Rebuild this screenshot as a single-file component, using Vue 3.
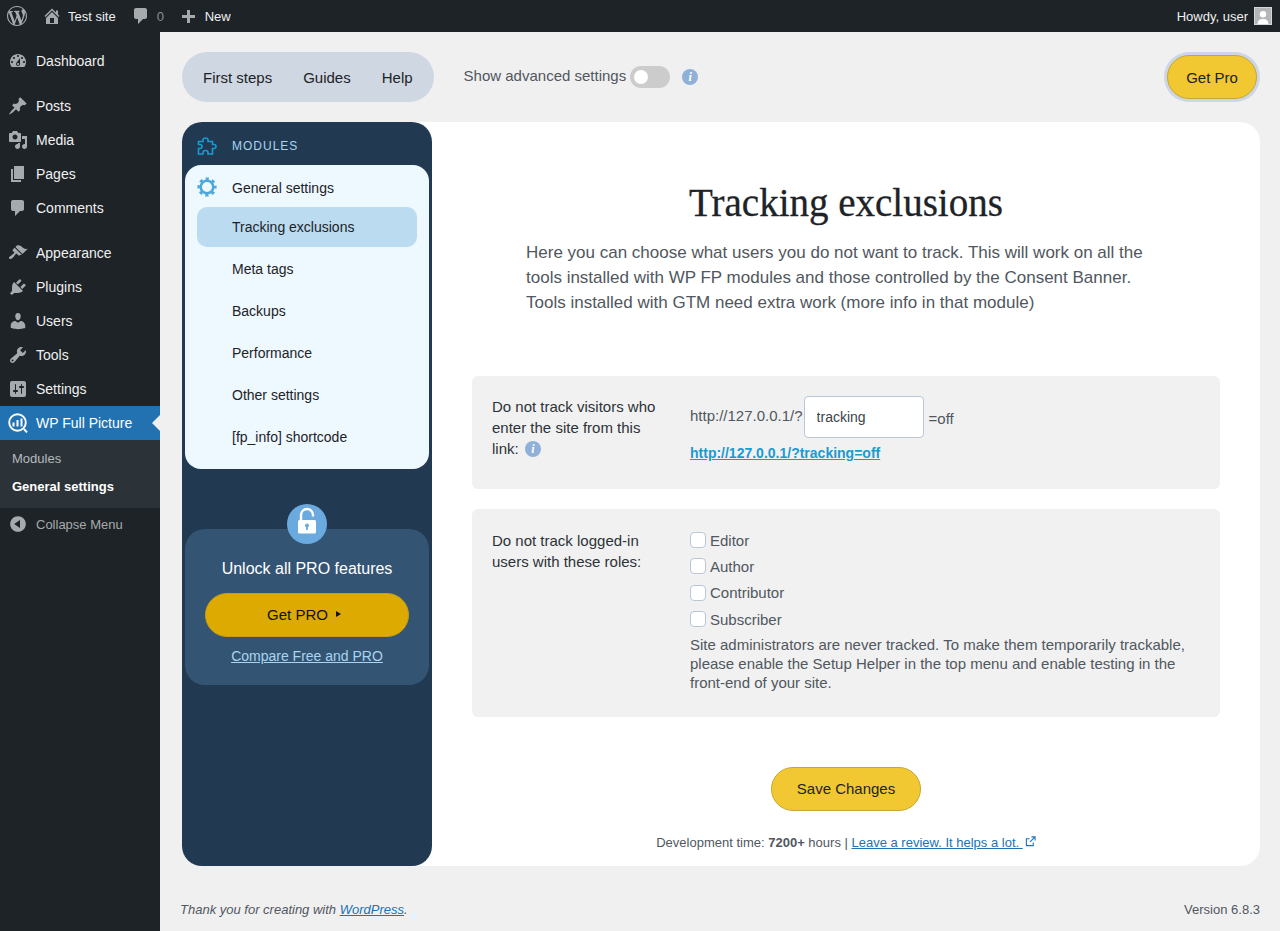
<script setup>
const icons = {
  wp: "M20 10c0-5.51-4.49-10-10-10C4.48 0 0 4.49 0 10c0 5.52 4.48 10 10 10 5.51 0 10-4.48 10-10zM7.78 15.37L4.37 6.22c.55-.02 1.17-.08 1.17-.08.5-.06.44-1.13-.06-1.11 0 0-1.45.11-2.37.11-.18 0-.37 0-.58-.01C4.12 2.69 6.87 1.11 10 1.11c2.33 0 4.45.87 6.05 2.34-.68-.11-1.65.39-1.65 1.58 0 .74.45 1.36.9 2.1.35.61.55 1.36.55 2.46 0 1.49-1.4 5-1.4 5l-3.03-8.37c.54-.02.82-.17.82-.17.5-.05.44-1.25-.06-1.22 0 0-1.44.12-2.38.12-.87 0-2.33-.12-2.33-.12-.5-.03-.56 1.2-.06 1.22l.92.08 1.26 3.41zM17.41 10c.24-.64.74-1.87.43-4.25.7 1.29 1.05 2.71 1.05 4.25 0 3.29-1.73 6.24-4.4 7.78.97-2.59 1.94-5.2 2.92-7.78zM6.1 18.09C3.12 16.65 1.11 13.53 1.11 10c0-1.3.23-2.48.72-3.59C3.25 10.3 4.67 14.2 6.1 18.09zm4.03-6.63l2.58 6.98c-.86.29-1.76.45-2.71.45-.79 0-1.57-.11-2.29-.33.81-2.38 1.62-4.72 2.42-7.1z",
  home: "M16 8.5l1.53 1.53-1.06 1.06L10 4.62l-6.47 6.47-1.06-1.06L10 2.5l4 4v-2h2v4zm-6-2.46l6 5.99V18H4v-5.97zM12 17v-5H8v5h4z",
  comment: "M5 2h9c1.1 0 2 .9 2 2v7c0 1.1-.9 2-2 2h-2l-5 5v-5H5c-1.1 0-2-.9-2-2V4c0-1.1.9-2 2-2z",
  plus: "M17 7v3h-5v5H9v-5H4V7h5V2h3v5h5z",
  dashboard: "M3.76 16h12.48c1.1-1.37 1.76-3.11 1.76-5 0-4.42-3.58-8-8-8s-8 3.58-8 8c0 1.89.66 3.63 1.76 5zM10 4c.55 0 1 .45 1 1s-.45 1-1 1-1-.45-1-1 .45-1 1-1zM6 6c.55 0 1 .45 1 1s-.45 1-1 1-1-.45-1-1 .45-1 1-1zm8 0c.55 0 1 .45 1 1s-.45 1-1 1-1-.45-1-1 .45-1 1-1zm-5.37 5.55L12 7v6c0 1.1-.9 2-2 2s-2-.9-2-2c0-.57.24-1.08.63-1.45zM4 10c.55 0 1 .45 1 1s-.45 1-1 1-1-.45-1-1 .45-1 1-1zm12 0c.55 0 1 .45 1 1s-.45 1-1 1-1-.45-1-1 .45-1 1-1zm-5 3c0-.55-.45-1-1-1s-1 .45-1 1 .45 1 1 1 1-.45 1-1z",
  posts: "M10.44 3.02l1.82-1.82 6.36 6.35-1.83 1.82c-1.05-.68-2.48-.57-3.41.36l-.75.75c-.92.93-1.04 2.35-.35 3.41l-1.83 1.82-2.41-2.41-2.8 2.79c-.42.42-3.38 2.71-3.8 2.29s1.86-3.39 2.28-3.81l2.79-2.79L4.1 9.36l1.83-1.82c1.05.69 2.48.57 3.4-.36l.75-.75c.93-.92 1.05-2.35.36-3.41z",
  media: "M13 11V4c0-.55-.45-1-1-1h-1.67L9 1H5L3.67 3H2c-.55 0-1 .45-1 1v7c0 .55.45 1 1 1h10c.55 0 1-.45 1-1zM7 4.5c1.38 0 2.5 1.12 2.5 2.5S8.38 9.5 7 9.5 4.5 8.38 4.5 7 5.62 4.5 7 4.5zM14 6h5v10.5c0 1.38-1.12 2.5-2.5 2.5S14 17.88 14 16.5s1.12-2.5 2.5-2.5c.17 0 .34.02.5.05V9h-3V6zm-4 8.05V13h2v3.5c0 1.38-1.12 2.5-2.5 2.5S7 17.88 7 16.5 8.12 14 9.5 14c.17 0 .34.02.5.05z",
  pages: "M6 15V2h10v13H6zm-1 1h8v2H3V5h2v11z",
  appearance: "M14.48 11.06L7.41 3.99l1.5-1.5c.5-.56 2.3-.47 3.51.32 1.21.8 1.43 1.28 2.91 2.1 1.18.64 2.45 1.26 4.45.85zm-.71.71L6.7 4.7 4.93 6.47c-.39.39-.39 1.02 0 1.41l1.06 1.06c.39.39.39 1.03 0 1.42-.6.6-1.43 1.11-2.21 1.69-.35.26-.7.53-1.01.84C1.43 13.23.4 14.75 1.4 15.7c.95 1 2.47-.03 3.81-1.37.31-.31.58-.66.84-1.01.58-.78 1.09-1.61 1.69-2.21.39-.39 1.02-.39 1.41 0l1.06 1.06c.39.39 1.02.39 1.41 0z",
  plugins: "M13.11 4.36L9.87 7.6 8 5.73l3.24-3.24c.35-.34 1.05-.2 1.56.32.52.51.66 1.21.31 1.55zm-8 1.77l.91-1.12 9.01 9.01-1.19.84c-.71.71-2.63 1.16-3.82 1.16H6.14L4.9 17.26c-.59.59-1.54.59-2.12 0-.59-.58-.59-1.53 0-2.12l1.24-1.24v-3.88c0-1.13.4-3.19 1.09-3.89zm7.26 3.97l3.24-3.24c.34-.35 1.04-.21 1.55.31.52.51.66 1.21.31 1.55l-3.24 3.25z",
  users: "M10 9.25c-2.27 0-2.73-3.44-2.73-3.44C7 4.02 7.82 2 9.97 2c2.16 0 2.98 2.02 2.71 3.81 0 0-.41 3.44-2.68 3.44zm0 2.57L12.72 10c2.39 0 4.52 2.33 4.52 4.53v2.49s-3.65 1.13-7.24 1.13c-3.65 0-7.24-1.13-7.24-1.13v-2.49c0-2.25 1.94-4.48 4.47-4.48z",
  tools: "M16.68 9.77c-1.34 1.34-3.3 1.67-4.95.99l-5.41 6.52c-.99.99-2.59.99-3.58 0s-.99-2.59 0-3.57l6.52-5.42c-.68-1.65-.35-3.61.99-4.95 1.28-1.28 3.12-1.62 4.72-1.06l-2.89 2.89 2.82 2.82 2.86-2.87c.53 1.58.18 3.39-1.08 4.65zM3.81 16.21c.4.39 1.04.39 1.43 0 .4-.4.4-1.04 0-1.43-.39-.4-1.03-.4-1.43 0-.39.39-.39 1.03 0 1.43z",
  settings: "M18 16V4c0-1.1-.9-2-2-2H4c-1.1 0-2 .9-2 2v12c0 1.1.9 2 2 2h12c1.1 0 2-.9 2-2zM8 11h1c.55 0 1 .45 1 1s-.45 1-1 1H8v1.5c0 .28-.22.5-.5.5s-.5-.22-.5-.5V13H6c-.55 0-1-.45-1-1s.45-1 1-1h1V5.5c0-.28.22-.5.5-.5s.5.22.5.5V11zm5-2h-1c-.55 0-1-.45-1-1s.45-1 1-1h1V5.5c0-.28.22-.5.5-.5s.5.22.5.5V7h1c.55 0 1 .45 1 1s-.45 1-1 1h-1v5.5c0 .28-.22.5-.5.5s-.5-.22-.5-.5V9z",
  collapse: "M10 2.16c4.33 0 7.84 3.51 7.84 7.84s-3.51 7.84-7.84 7.84S2.16 14.33 2.16 10 5.71 2.16 10 2.16zm2 11.72V6.12L6.18 9.97z",
}

// sidebar groups, wp puts a separator between them
const menuGroups = [
  [{ label: "Dashboard", icon: "dashboard" }],
  [
    { label: "Posts", icon: "posts" },
    { label: "Media", icon: "media" },
    { label: "Pages", icon: "pages" },
    { label: "Comments", icon: "comment" },
  ],
  [
    { label: "Appearance", icon: "appearance" },
    { label: "Plugins", icon: "plugins" },
    { label: "Users", icon: "users" },
    { label: "Tools", icon: "tools" },
    { label: "Settings", icon: "settings" },
  ],
]

const tabs = ["First steps", "Guides", "Help"]
const subLinks = [
  { label: "Tracking exclusions", active: true },
  { label: "Meta tags" },
  { label: "Backups" },
  { label: "Performance" },
  { label: "Other settings" },
  { label: "[fp_info] shortcode" },
]
const roles = ["Editor", "Author", "Contributor", "Subscriber"]
</script>

<template>
  <div class="page">
    <header class="adminbar">
      <svg class="bar-logo" viewBox="0 0 20 20"><path :d="icons.wp" /></svg>
      <svg class="bar-icon home" viewBox="0 0 20 20"><path :d="icons.home" /></svg>
      <span class="bar-text">Test site</span>
      <svg class="bar-icon bubble" viewBox="0 0 20 20"><path :d="icons.comment" /></svg>
      <span class="bar-count">0</span>
      <svg class="bar-icon plus" viewBox="0 0 20 20"><path :d="icons.plus" /></svg>
      <span class="bar-text">New</span>
      <span class="bar-text howdy">Howdy, user</span>
      <svg class="avatar" viewBox="0 0 18 18">
        <rect x=".5" y=".5" width="17" height="17" fill="#b4b7ba" stroke="#d4d6d8" />
        <circle cx="9" cy="7.200" r="3.200" fill="#fff" />
        <path d="M3.500 17c.3-3.800 2.500-5 5.500-5s5.200 1.200 5.500 5z" />
      </svg>
    </header>

    <div class="layout">
      <nav class="sidemenu">
        <div v-for="(group, i) in menuGroups" :key="i" class="menu-group">
          <a v-for="item in group" :key="item.label" class="menu-item">
            <svg viewBox="0 0 20 20"><path :d="icons[item.icon]" /></svg>
            <span>{{ item.label }}</span>
          </a>
        </div>
        <a class="menu-item current">
          <svg class="fp-icon" viewBox="0 0 20 20" fill="none" stroke="#fff">
            <circle cx="9.500" cy="9.500" r="8.300" stroke-width="1.900" />
            <path d="M16 16l3 3.300" stroke-width="2" />
            <path d="M5.500 9.500v4M9.500 7v6.500M13.500 5.500v8" stroke-width="2" />
          </svg>
          <span>WP Full Picture</span>
        </a>
        <div class="submenu">
          <a>Modules</a>
          <a class="strong">General settings</a>
        </div>
        <a class="menu-item collapse">
          <svg viewBox="0 0 20 20"><path :d="icons.collapse" /></svg>
          <span>Collapse Menu</span>
        </a>
      </nav>

      <main class="content">
        <div class="topline">
          <div class="tabs">
            <a v-for="tab in tabs" :key="tab">{{ tab }}</a>
          </div>
          <span class="advanced">Show advanced settings</span>
          <span class="toggle"><i></i></span>
          <span class="info top-info">i</span>
          <button class="get-pro" type="button">Get Pro</button>
        </div>

        <div class="panel">
          <aside class="modules">
            <div class="modules-head">
              <svg viewBox="0 0 20 18" fill="none" stroke="#1b9ad0" stroke-width="1.600">
                <path d="M1.500 4.500H6V3C6 1.500 7 1 8.500 1S11 1.500 11 3V4.500H15.500V7.500H17C18.500 7.500 19 8 19 9.500S18.500 11.500 17 11.500H15.500V17H11V15.500C11 14 10 13.500 8.500 13.500S6 14 6 15.500V17H1.500V11.500H3C4.500 11.500 5 11 5 9.500S4.500 7.500 3 7.500H1.500Z" />
              </svg>
              <span>MODULES</span>
            </div>
            <div class="module-group">
              <div class="group-title">
                <svg viewBox="0 0 20 20" fill="none" stroke="#4aa8dc">
                  <circle cx="10" cy="10" r="6.300" stroke-width="2.500" />
                  <circle cx="10" cy="10" r="8.300" stroke-width="2.600" stroke-dasharray="3.200 3.320" stroke-dashoffset="1.600" />
                </svg>
                <span>General settings</span>
              </div>
              <a v-for="link in subLinks" :key="link.label" class="module-link" :class="{ active: link.active }">{{ link.label }}</a>
            </div>
            <div class="promo">
              <svg class="lock" viewBox="0 0 40 40">
                <circle cx="20" cy="20" r="20" fill="#6aaade" />
                <path d="M14 17V11a6 6 0 0 1 12 0v1.500" fill="none" stroke="#fff" stroke-width="2.400" />
                <rect x="11" y="16" width="18" height="13.500" rx="1.500" fill="#fff" />
                <circle cx="20" cy="21.500" r="2" fill="#6aaade" />
                <rect x="19.100" y="22" width="1.800" height="4" fill="#6aaade" />
              </svg>
              <div class="promo-title">Unlock all PRO features</div>
              <button class="promo-btn" type="button">Get PRO<i></i></button>
              <a class="promo-link">Compare Free and PRO</a>
            </div>
          </aside>

          <section class="settings">
            <h1>Tracking exclusions</h1>
            <p class="intro">Here you can choose what users you do not want to track. This will work on all the tools installed with WP FP modules and those controlled by the Consent Banner. Tools installed with GTM need extra work (more info in that module)</p>

            <div class="row first">
              <div class="row-label">Do not track visitors who enter the site from this link: <span class="info label-info">i</span></div>
              <div>
                <div class="url-line">
                  <span class="base">http://127.0.0.1/?</span>
                  <input type="text" value="tracking" />
                  <span class="off">=off</span>
                </div>
                <a class="test-link">http://127.0.0.1/?tracking=off</a>
              </div>
            </div>

            <div class="row second">
              <div class="row-label">Do not track logged-in users with these roles:</div>
              <div class="roles">
                <label v-for="role in roles" :key="role"><input type="checkbox" />{{ role }}</label>
                <p>Site administrators are never tracked. To make them temporarily trackable, please enable the Setup Helper in the top menu and enable testing in the front-end of your site.</p>
              </div>
            </div>

            <button class="save" type="button">Save Changes</button>
            <div class="devtime">
              Development time: <b>7200+</b> hours | <a>Leave a review. It helps a lot. <svg viewBox="0 0 12 12" fill="none" stroke="#2271b1" stroke-width="1.200"><path d="M9 7v3.500H1.500V3H5M7 1h4v4M11 1L5.500 6.500" /></svg></a>
            </div>
          </section>
        </div>

        <footer class="wpfooter">
          <em>Thank you for creating with <a>WordPress</a>.</em>
          <span>Version 6.8.3</span>
        </footer>
      </main>
    </div>
  </div>
</template>

<style>
html,
body {
  background: #f0f0f1;
}
</style>

<style scoped>
* {
  box-sizing: border-box;
}
.page {
  height: 931px;
  overflow: hidden;
  font-family: "Liberation Sans", Arial, sans-serif;
  font-size: 13px;
  color: #3c434a;
  background: #f0f0f1;
}

/* admin bar */
.adminbar {
  display: flex;
  align-items: center;
  height: 32px;
  padding: 0 8px 0 7px;
  background: #1d2327;
  color: #f0f0f1;
}
.adminbar svg path {
  fill: currentColor;
}
.bar-logo {
  width: 20px;
  height: 20px;
  color: #a7aaad;
}
.bar-icon {
  width: 20px;
  height: 20px;
  color: #a7aaad;
}
.home {
  margin-left: 15px;
  margin-right: 6px;
}
.bubble {
  margin-left: 15px;
  margin-right: 6px;
}
.plus {
  margin-left: 13px;
  margin-right: 7px;
  margin-top: 3px;
}
.bar-count {
  color: #8c8f94;
  width: 8px;
}
.howdy {
  margin-left: auto;
  margin-right: 6px;
}
.avatar {
  width: 18px;
  height: 18px;
  color: #fff;
}

.layout {
  display: grid;
  grid-template-columns: 160px 1fr;
  height: 899px;
}

/* left menu */
.sidemenu {
  background: #1d2327;
  padding-top: 12px;
}
.menu-group {
  margin-bottom: 11px;
}
.menu-group:nth-child(3) {
  margin-bottom: 0;
}
.menu-item {
  display: flex;
  align-items: center;
  height: 34px;
  font-size: 14px;
  color: #f0f0f1;
  position: relative;
}
.menu-item svg {
  width: 20px;
  height: 20px;
  margin: 0 8px 0 8px;
  fill: #a7aaad;
  flex: none;
}
.menu-item.current {
  background: #2271b1;
  color: #fff;
}
.menu-item.current::after {
  content: "";
  position: absolute;
  right: 0;
  top: 9px;
  border: 8px solid transparent;
  border-right-color: #f0f0f1;
}
.menu-item svg.fp-icon {
  fill: none;
}
.submenu {
  background: #2c3338;
  height: 68px;
  padding-top: 5px;
  font-size: 13px;
  color: #b4b9be;
}
.submenu a {
  display: block;
  height: 28px;
  line-height: 28px;
  padding-left: 12px;
}
.submenu .strong {
  font-weight: 700;
  color: #fff;
}
.menu-item.collapse {
  font-size: 13px;
  color: #a7aaad;
  height: 32px;
}

/* main */
.content {
  padding: 20px 20px 0;
  min-width: 0;
}
.topline {
  display: flex;
  align-items: center;
  height: 50px;
  margin-left: 2px;
}
.tabs {
  display: flex;
  align-items: center;
  gap: 31px;
  height: 50px;
  padding: 0 21px;
  border-radius: 25px;
  background: #cfd7e3;
  font-size: 15px;
  color: #1d2327;
  margin-right: 30px;
}
.advanced {
  font-size: 15px;
  color: #50575e;
  margin-bottom: 4px;
}
.toggle {
  width: 40px;
  height: 22px;
  border-radius: 11px;
  background: #ccc;
  margin-left: 4px;
  display: flex;
  align-items: center;
  padding-left: 4px;
}
.toggle i {
  width: 14px;
  height: 14px;
  border-radius: 50%;
  background: #fff;
}
.info {
  display: inline-block;
  width: 16px;
  height: 16px;
  border-radius: 50%;
  background: #8fb0d8;
  color: #fff;
  font: italic 700 12px/16px "Liberation Serif", serif;
  text-align: center;
}
.top-info {
  margin-left: 12px;
}
.label-info {
  margin-left: 2px;
  vertical-align: 1px;
}
.get-pro {
  margin-left: auto;
  margin-right: 3px;
  width: 90px;
  height: 44px;
  border: 1px solid #c9a632;
  border-radius: 22px;
  background: #f2c832;
  box-shadow: 0 0 0 3px #ccd6e6;
  font: 15px "Liberation Sans", Arial, sans-serif;
  color: #1d2327;
}

.panel {
  display: flex;
  height: 744px;
  margin: 20px 0 0 2px;
  background: #fff;
  border-radius: 20px;
}
.modules {
  width: 250px;
  flex: none;
  padding: 0 3px;
  background: #213a52;
  border-radius: 20px;
}
.modules-head {
  display: flex;
  align-items: center;
  height: 43px;
  padding: 5px 0 0 12px;
  font-size: 12px;
  letter-spacing: 1px;
  color: #a8d4ee;
}
.modules-head svg {
  width: 20px;
  height: 18px;
  margin-right: 15px;
}
.module-group {
  padding: 13px 12px 12px;
  border-radius: 16px;
  background: #eef8ff;
  font-size: 14px;
  color: #1d2327;
}
.group-title {
  display: flex;
  align-items: center;
  height: 20px;
  margin-bottom: 9px;
}
.group-title svg {
  width: 20px;
  height: 20px;
  margin-right: 15px;
  margin-top: -3px;
}
.module-link {
  display: block;
  height: 40px;
  line-height: 40px;
  padding-left: 35px;
  margin-bottom: 2px;
  border-radius: 10px;
}
.module-link:last-child {
  margin-bottom: 0;
}
.module-link.active {
  background: #badbf0;
}
.promo {
  position: relative;
  height: 156px;
  margin-top: 60px;
  padding: 30px 20px 0;
  border-radius: 20px;
  background: #345474;
  text-align: center;
}
.lock {
  position: absolute;
  left: 102px;
  top: -25px;
  width: 40px;
  height: 40px;
}
.promo-title {
  font-size: 16px;
  line-height: 20px;
  color: #fff;
}
.promo-btn {
  display: block;
  width: 100%;
  height: 44px;
  margin-top: 14px;
  padding: 0 6px 2px 0;
  border: 1px solid #c99d10;
  border-radius: 22px;
  background: #dcaa00;
  font: 15px "Liberation Sans", Arial, sans-serif;
  color: #111;
}
.promo-btn i {
  display: inline-block;
  margin-left: 8px;
  vertical-align: 3px;
  border-left: 5px solid #111;
  border-top: 3px solid transparent;
  border-bottom: 3px solid transparent;
}
.promo-link {
  display: block;
  margin-top: 10px;
  font-size: 14px;
  line-height: 18px;
  color: #a9d5ee;
  text-decoration: underline;
}

.settings {
  flex: 1;
  min-width: 0;
  padding: 58px 40px 0;
}
h1 {
  margin: 0;
  font: 400 39px/46px "Liberation Serif", "Times New Roman", serif;
  -webkit-text-stroke: 0.3px #1d2327;
  color: #1d2327;
  text-align: center;
}
.intro {
  width: 640px;
  margin: 14px auto 61px;
  font-size: 17px;
  line-height: 25px;
  color: #50575e;
}
.row {
  display: grid;
  grid-template-columns: 198px 1fr;
  padding: 20px;
  border-radius: 6px;
  background: #f1f1f1;
  font-size: 15px;
}
.row.first {
  height: 113px;
}
.row.second {
  height: 208px;
  margin-top: 20px;
}
.row-label {
  line-height: 21px;
  color: #2c3338;
  padding-right: 25px;
}
.second .row-label {
  padding-top: 1px;
}
.url-line {
  display: flex;
  align-items: center;
  color: #50575e;
}
.url-line input {
  width: 120px;
  height: 42px;
  margin: 0 5px 0 1px;
  padding: 0 12px;
  border: 1px solid #b9c6da;
  border-radius: 4px;
  background: #fff;
  font: 14px "Liberation Sans", Arial, sans-serif;
  color: #3c434a;
}
.base {
  padding-bottom: 3px;
}
.off {
  padding-top: 2px;
}
.test-link {
  display: block;
  margin-top: 6px;
  font-size: 14px;
  line-height: 18px;
  font-weight: 700;
  color: #1b9ad0;
  text-decoration: underline;
}
.roles {
  margin-top: -2px;
  color: #50575e;
}
.roles label {
  display: flex;
  align-items: center;
  height: 26.3px;
}
.roles input {
  appearance: none;
  width: 16px;
  height: 16px;
  margin: 0 4px 0 0;
  border: 1px solid #b9c6da;
  border-radius: 4px;
  background: #fff;
}
.roles p {
  margin: 3px 0 0;
  line-height: 19px;
}
.save {
  display: block;
  width: 150px;
  height: 44px;
  margin: 50px auto 0;
  padding: 0 0 2px;
  border: 1px solid #c9a632;
  border-radius: 22px;
  background: #f2c832;
  font: 15px "Liberation Sans", Arial, sans-serif;
  color: #1d2327;
}
.devtime {
  margin-top: 24px;
  line-height: 16px;
  text-align: center;
  color: #50575e;
}
.devtime a {
  color: #2271b1;
  text-decoration: underline;
}
.devtime svg {
  width: 11px;
  height: 11px;
  margin-left: 2px;
}

.wpfooter {
  display: flex;
  justify-content: space-between;
  margin-top: 36px;
  line-height: 16px;
  color: #50575e;
}
.wpfooter a {
  color: #2271b1;
  text-decoration: underline;
}
</style>
